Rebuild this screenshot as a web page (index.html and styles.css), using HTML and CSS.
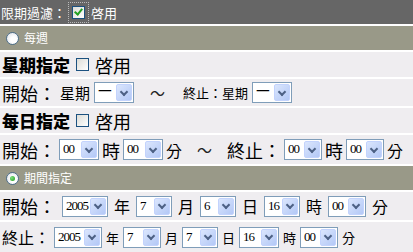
FILE: index.html
```html
<!DOCTYPE html>
<html lang="zh-Hant">
<head>
    <meta charset="UTF-8">
    <title>限期過濾</title>
    <link rel="stylesheet" href="styles.css">
</head>
<body>
    <div class="panel">
        <div class="row head">
            <span>限期過濾：</span>
            <span class="focus"><span class="check on"></span></span>
            <span>啓用</span>
        </div>

        <div class="row bar">
            <span class="radio"></span>
            <span>每週</span>
        </div>

        <div class="row title">
            <b>星期指定</b>
            <span class="check"></span>
            <span class="big">啓用</span>
        </div>

        <div class="row line">
            <span class="big">開始：</span>
            <span class="mid">星期</span>
            <span class="sel w40"><span class="val">一</span><span class="arrow"></span></span>
            <span class="tilde">～</span>
            <span class="small">終止：星期</span>
            <span class="sel w40"><span class="val">一</span><span class="arrow"></span></span>
        </div>

        <div class="row title">
            <b>每日指定</b>
            <span class="check"></span>
            <span class="big">啓用</span>
        </div>

        <div class="row line tall">
            <span class="big">開始：</span>
            <span class="sel w40"><span class="val num">00</span><span class="arrow"></span></span>
            <span class="big">時</span>
            <span class="sel w40"><span class="val num">00</span><span class="arrow"></span></span>
            <span class="mid2">分</span>
            <span class="tilde">～</span>
            <span class="big">終止：</span>
            <span class="sel w38"><span class="val num">00</span><span class="arrow"></span></span>
            <span class="big">時</span>
            <span class="sel w38"><span class="val num">00</span><span class="arrow"></span></span>
            <span class="mid2">分</span>
        </div>

        <div class="row bar">
            <span class="radio on"></span>
            <span>期間指定</span>
        </div>

        <div class="row line wide">
            <span class="big">開始：</span>
            <span class="sel w46"><span class="val num">2005</span><span class="arrow"></span></span>
            <span class="mid2">年</span>
            <span class="sel w36"><span class="val num">7</span><span class="arrow"></span></span>
            <span class="mid2">月</span>
            <span class="sel w36"><span class="val num">6</span><span class="arrow"></span></span>
            <span class="mid2">日</span>
            <span class="sel w36"><span class="val num">16</span><span class="arrow"></span></span>
            <span class="mid2">時</span>
            <span class="sel w38"><span class="val num">00</span><span class="arrow"></span></span>
            <span class="mid2">分</span>
        </div>

        <div class="row line last">
            <span class="mid2">終止：</span>
            <span class="sel w48"><span class="val num">2005</span><span class="arrow"></span></span>
            <span class="small">年</span>
            <span class="sel w38"><span class="val num">7</span><span class="arrow"></span></span>
            <span class="small">月</span>
            <span class="sel w36"><span class="val num">7</span><span class="arrow"></span></span>
            <span class="small">日</span>
            <span class="sel w40"><span class="val num">16</span><span class="arrow"></span></span>
            <span class="small">時</span>
            <span class="sel w38"><span class="val num">00</span><span class="arrow"></span></span>
            <span class="small">分</span>
        </div>
    </div>
</body>
</html>
```

FILE: styles.css
```css
* {
    margin: 0;
    padding: 0;
    box-sizing: border-box;
}

body {
    font-family: "Noto Sans CJK TC", "Noto Sans", sans-serif;
    background: #ffffff;
    color: #000000;
    width: 413px;
    height: 252px;
    overflow: hidden;
}

.panel {
    display: flex;
    flex-direction: column;
    gap: 2px;
}

.row {
    display: flex;
    align-items: center;
    background: #efedf0;
    padding: 0 0 0 2px;
    gap: 4px;
    white-space: nowrap;
    line-height: 1;
}

.head {
    height: 24px;
    background: #666666;
    color: #ffffff;
    font-size: 13px;
    gap: 2px;
    padding-left: 1px;
}

.bar {
    height: 24px;
    background: #999988;
    color: #ffffff;
    font-size: 12px;
    gap: 5px;
    padding-left: 6px;
}

.title {
    height: 25px;
    font-size: 17px;
    gap: 6px;
}

.title b {
    font-weight: 900;
    font-size: 17px;
}

.line {
    height: 27px;
    gap: 4px;
}

.tall {
    height: 29px;
    gap: 3px;
}

.tall .tilde {
    margin: 0 12px;
}

.wide {
    gap: 6px;
    height: 28px;
}

.last {
    height: 30px;
    gap: 4px;
}

.big {
    font-size: 18px;
}

.mid {
    font-size: 15px;
}

.mid2 {
    font-size: 16px;
}

.small {
    font-size: 13px;
}

.tilde {
    font-size: 15px;
    margin: 0 14px 0 12px;
    color: #222222;
}

/* checkbox + radio */
.focus {
    padding: 3px;
    border: 1px dotted #bbbbbb;
    display: flex;
}

.check {
    width: 13px;
    height: 13px;
    border: 1px solid #1c5180;
    background: linear-gradient(135deg, #dcdcd7, #ffffff);
    display: inline-flex;
    align-items: center;
    justify-content: center;
}

.check.on::after {
    content: '';
    width: 3px;
    height: 6px;
    border: solid #21a121;
    border-width: 0 2px 2px 0;
    transform: translateY(-1px) rotate(40deg);
}

.radio {
    width: 13px;
    height: 13px;
    border-radius: 50%;
    border: 1px solid #4e6f8a;
    background: radial-gradient(circle at 60% 60%, #ffffff 30%, #d8dce4 100%);
    display: inline-flex;
    align-items: center;
    justify-content: center;
}

.radio.on::after {
    content: '';
    width: 5px;
    height: 5px;
    border-radius: 50%;
    background: radial-gradient(circle at 35% 35%, #7ee07e, #1d9a1d);
}

/* fake select box */
.sel {
    display: inline-flex;
    height: 21px;
    border: 1px solid #7f9db9;
    background: #ffffff;
    padding: 1px;
}

.w36 { width: 36px; }
.w38 { width: 38px; }
.w40 { width: 40px; }
.w46 { width: 46px; }
.w48 { width: 48px; }

.val {
    flex: 1;
    font-family: "Liberation Serif", serif;
    font-size: 14px;
    padding-left: 2px;
    line-height: 15px;
}

.val.num {
    font-size: 13px;
    letter-spacing: -1px;
}

.arrow {
    width: 16px;
    border-radius: 2px;
    background: linear-gradient(135deg, #dbe6fd, #b3c8f6);
    border: 1px solid #c3d3fd;
    display: flex;
    align-items: center;
    justify-content: center;
}

.arrow::after {
    content: '';
    width: 4px;
    height: 4px;
    border: solid #4d6185;
    border-width: 0 2px 2px 0;
    transform: translateY(-1px) rotate(45deg);
}
```
